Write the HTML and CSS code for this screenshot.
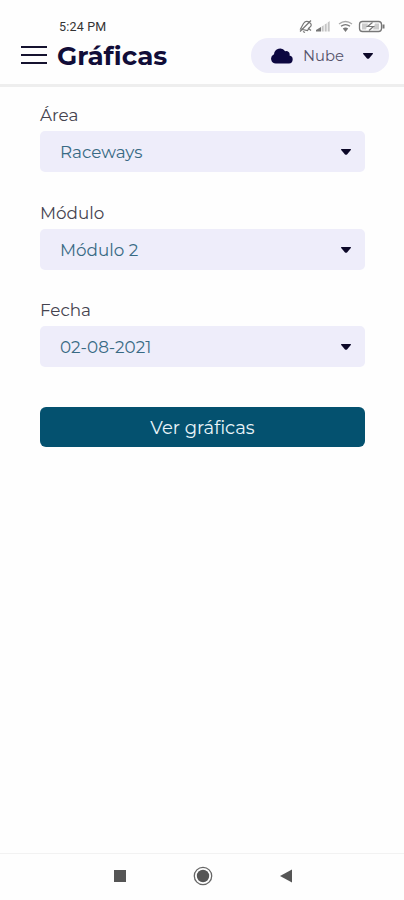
FILE: index.html
```html
<!DOCTYPE html>
<html lang="es">
<head>
  <meta charset="UTF-8">
  <meta name="viewport" content="width=device-width, initial-scale=1.0">
  <title>Gráficas</title>
  <link rel="stylesheet" href="styles.css">
</head>
<body>

  <div class="status-bar">
    <span class="time">5:24 PM</span>
    <svg class="status-icons" width="88" height="16" viewBox="0 0 88 16" fill="none" stroke="#777">
      <!-- silencio -->
      <path d="M2.500 11L5.500 5.500Q8 2 11.500 4.500T11.500 9.500L9.500 12.500zM5 13.500l2 1M2 13.500L13 2.500M10 10l3 2.500" stroke-width="1.200"/>
      <!-- señal -->
      <path d="M18 13.500v-1.500l5-3v4.500z" fill="#777" stroke="none"/>
      <path d="M23.700 13.500V8.500l2-1.200v6.200zM26.700 13.500V6.500l2-1.200v8.200zM29.700 13.500V4.500l2-1.500v10.500z" fill="#c4c4c4" stroke="none"/>
      <!-- wifi -->
      <path d="M41 6q6.500-5 13 0" stroke="#aaa" stroke-width="1.300"/>
      <path d="M43 8.300q4.500-3.500 9 0" stroke-width="1.300"/>
      <path d="M44.800 10.500q2.700-2 5.400 0l-2.700 3.500z" fill="#777" stroke="none"/>
      <!-- batería -->
      <rect x="61.500" y="3.500" width="22" height="10" rx="3" stroke-width="1.300"/>
      <path d="M85.500 6.500v4" stroke-width="2"/>
      <path d="M64 5.500h6l-2 6h-4zM77 5.500h4v6h-6z" fill="#ccc" stroke="none"/>
      <path d="M74.500 4.500L69.500 8.500h6L71 12.500" stroke-width="1.200"/>
    </svg>
  </div>

  <header class="header">
    <svg class="menu" width="26" height="20" viewBox="0 0 26 20" stroke="#15122f" stroke-width="2">
      <path d="M0 2h26M0 10h26M0 18h26"/>
    </svg>
    <h1>Gráficas</h1>
    <div class="source">
      <svg width="22" height="16" viewBox="0 0 22 16" fill="#0c0740">
        <path d="M5 15.500a4.800 4.800 0 0 1-2-9.200A6.200 6.200 0 0 1 14.200 3.200a3.500 3.500 0 0 1 4.300 4.400A4 4 0 0 1 18 15.500z"/>
      </svg>
      <span>Nube</span>
      <svg class="arrow" width="12" height="8" viewBox="0 0 12 8">
        <path d="M1.500 1h9q1 .3.300 1.100L7 6.400q-1 .9-2 0L1.200 2.100Q.5 1.300 1.500 1z"/>
      </svg>
    </div>
  </header>

  <main class="content">
    <div class="field">
      <label>Área</label>
      <div class="select">
        <span>Raceways</span>
        <svg class="arrow" width="12" height="8" viewBox="0 0 12 8">
          <path d="M1.500 1h9q1 .3.300 1.100L7 6.400q-1 .9-2 0L1.200 2.100Q.5 1.300 1.500 1z"/>
        </svg>
      </div>
    </div>

    <div class="field">
      <label>Módulo</label>
      <div class="select">
        <span>Módulo 2</span>
        <svg class="arrow" width="12" height="8" viewBox="0 0 12 8">
          <path d="M1.500 1h9q1 .3.300 1.100L7 6.400q-1 .9-2 0L1.200 2.100Q.5 1.300 1.500 1z"/>
        </svg>
      </div>
    </div>

    <div class="field">
      <label>Fecha</label>
      <div class="select">
        <span>02-08-2021</span>
        <svg class="arrow" width="12" height="8" viewBox="0 0 12 8">
          <path d="M1.500 1h9q1 .3.300 1.100L7 6.400q-1 .9-2 0L1.200 2.100Q.5 1.300 1.500 1z"/>
        </svg>
      </div>
    </div>

    <button>Ver gráficas</button>
  </main>

  <nav class="nav-bar">
    <svg width="20" height="20" viewBox="0 0 20 20" fill="#555">
      <rect x="4" y="4" width="12" height="12"/>
    </svg>
    <svg width="20" height="20" viewBox="0 0 20 20" fill="#555">
      <circle cx="10" cy="10" r="8.700" fill="none" stroke="#666" stroke-width="1.300"/>
      <circle cx="10" cy="10" r="6.200"/>
    </svg>
    <svg width="20" height="20" viewBox="0 0 20 20" fill="#555">
      <path d="M4 10l12-6.500v13z"/>
    </svg>
  </nav>

</body>
</html>
```
FILE: styles.css
```css
* {
  box-sizing: border-box;
}

body {
  font-family: Montserrat, Inter, sans-serif;
  background-color: #fefefe;
  margin: 0;
  height: 900px;
  display: flex;
  flex-direction: column;
  overflow: hidden;
}

.status-bar {
  height: 38px;
  padding: 18px 18px 0 59px;
  display: flex;
  justify-content: space-between;
  align-items: flex-start;
}

.time {
  font-family: Roboto, sans-serif;
  font-size: 12.5px;
  line-height: 18px;
  letter-spacing: 0.2px;
  color: #333;
}

.header {
  height: 49px;
  padding: 0 15px 0 21px;
  display: flex;
  align-items: flex-start;
  border-bottom: 3px solid #eee;
}

.menu {
  margin-top: 7px;
}

h1 {
  margin: 0 0 0 10px;
  font-size: 26.2px;
  font-weight: 700;
  line-height: 37px;
  color: #110d38;
}

.source {
  width: 138px;
  height: 35px;
  margin-left: auto;
  padding: 0 15px 0 20px;
  display: flex;
  align-items: center;
  border-radius: 18px;
  background: #eeedfa;
}

.source span {
  margin-left: 10px;
  font-size: 14.8px;
  color: #55536a;
}

.source .arrow {
  margin-left: auto;
}

.arrow {
  fill: #0c0828;
}

.content {
  flex: 1;
  padding: 18px 39px 0 40px;
}

.field {
  height: 97.5px;
}

label {
  display: block;
  height: 26px;
  font-size: 16.8px;
  line-height: 21px;
  color: #45434f;
}

.select {
  height: 41px;
  padding: 1px 13px 0 20px;
  display: flex;
  align-items: center;
  justify-content: space-between;
  border-radius: 5px;
  background: #eeedfa;
  color: #386a84;
  font-size: 16.8px;
}

button {
  display: block;
  width: 100%;
  height: 40px;
  margin-top: 9.5px;
  padding: 1px 0 0;
  font-family: inherit;
  font-size: 18px;
  color: #eaf5f9;
  background-color: #04516f;
  border: none;
  border-radius: 6px;
}

.nav-bar {
  height: 47px;
  padding: 0 108px 2px 110px;
  display: flex;
  align-items: center;
  justify-content: space-between;
  border-top: 1px solid #f2f2f2;
}
```
